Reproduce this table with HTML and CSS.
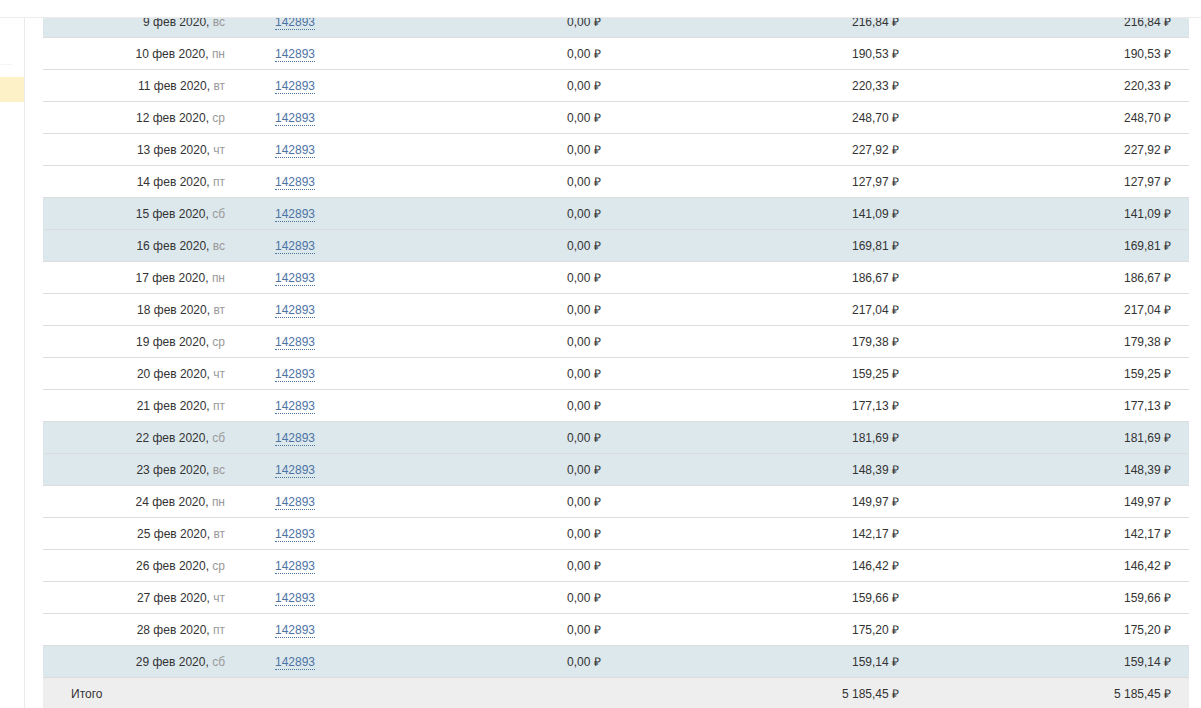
FILE: index.html
```html
<!DOCTYPE html>
<html lang="ru">
<head>
<meta charset="utf-8">
<title>Отчёт</title>
<link rel="stylesheet" href="styles.css">
</head>
<body>
<div class="page">
  <div class="topbar"></div>
  <div class="main">
    <aside class="sidebar">
      <div class="side-sep"></div>
      <div class="side-active"></div>
    </aside>
    <div class="content">
      <table class="report">
        <colgroup>
          <col class="c-date"><col class="c-id"><col class="c-a"><col class="c-b"><col class="c-c">
        </colgroup>
        <tbody>
          <tr class="we"><td class="date">9 фев 2020, <span class="wd">вс</span></td><td class="id"><a>142893</a></td><td class="zero">0,00 ₽</td><td class="num">216,84 ₽</td><td class="num last">216,84 ₽</td></tr>
          <tr><td class="date">10 фев 2020, <span class="wd">пн</span></td><td class="id"><a>142893</a></td><td class="zero">0,00 ₽</td><td class="num">190,53 ₽</td><td class="num last">190,53 ₽</td></tr>
          <tr><td class="date">11 фев 2020, <span class="wd">вт</span></td><td class="id"><a>142893</a></td><td class="zero">0,00 ₽</td><td class="num">220,33 ₽</td><td class="num last">220,33 ₽</td></tr>
          <tr><td class="date">12 фев 2020, <span class="wd">ср</span></td><td class="id"><a>142893</a></td><td class="zero">0,00 ₽</td><td class="num">248,70 ₽</td><td class="num last">248,70 ₽</td></tr>
          <tr><td class="date">13 фев 2020, <span class="wd">чт</span></td><td class="id"><a>142893</a></td><td class="zero">0,00 ₽</td><td class="num">227,92 ₽</td><td class="num last">227,92 ₽</td></tr>
          <tr><td class="date">14 фев 2020, <span class="wd">пт</span></td><td class="id"><a>142893</a></td><td class="zero">0,00 ₽</td><td class="num">127,97 ₽</td><td class="num last">127,97 ₽</td></tr>
          <tr class="we"><td class="date">15 фев 2020, <span class="wd">сб</span></td><td class="id"><a>142893</a></td><td class="zero">0,00 ₽</td><td class="num">141,09 ₽</td><td class="num last">141,09 ₽</td></tr>
          <tr class="we"><td class="date">16 фев 2020, <span class="wd">вс</span></td><td class="id"><a>142893</a></td><td class="zero">0,00 ₽</td><td class="num">169,81 ₽</td><td class="num last">169,81 ₽</td></tr>
          <tr><td class="date">17 фев 2020, <span class="wd">пн</span></td><td class="id"><a>142893</a></td><td class="zero">0,00 ₽</td><td class="num">186,67 ₽</td><td class="num last">186,67 ₽</td></tr>
          <tr><td class="date">18 фев 2020, <span class="wd">вт</span></td><td class="id"><a>142893</a></td><td class="zero">0,00 ₽</td><td class="num">217,04 ₽</td><td class="num last">217,04 ₽</td></tr>
          <tr><td class="date">19 фев 2020, <span class="wd">ср</span></td><td class="id"><a>142893</a></td><td class="zero">0,00 ₽</td><td class="num">179,38 ₽</td><td class="num last">179,38 ₽</td></tr>
          <tr><td class="date">20 фев 2020, <span class="wd">чт</span></td><td class="id"><a>142893</a></td><td class="zero">0,00 ₽</td><td class="num">159,25 ₽</td><td class="num last">159,25 ₽</td></tr>
          <tr><td class="date">21 фев 2020, <span class="wd">пт</span></td><td class="id"><a>142893</a></td><td class="zero">0,00 ₽</td><td class="num">177,13 ₽</td><td class="num last">177,13 ₽</td></tr>
          <tr class="we"><td class="date">22 фев 2020, <span class="wd">сб</span></td><td class="id"><a>142893</a></td><td class="zero">0,00 ₽</td><td class="num">181,69 ₽</td><td class="num last">181,69 ₽</td></tr>
          <tr class="we"><td class="date">23 фев 2020, <span class="wd">вс</span></td><td class="id"><a>142893</a></td><td class="zero">0,00 ₽</td><td class="num">148,39 ₽</td><td class="num last">148,39 ₽</td></tr>
          <tr><td class="date">24 фев 2020, <span class="wd">пн</span></td><td class="id"><a>142893</a></td><td class="zero">0,00 ₽</td><td class="num">149,97 ₽</td><td class="num last">149,97 ₽</td></tr>
          <tr><td class="date">25 фев 2020, <span class="wd">вт</span></td><td class="id"><a>142893</a></td><td class="zero">0,00 ₽</td><td class="num">142,17 ₽</td><td class="num last">142,17 ₽</td></tr>
          <tr><td class="date">26 фев 2020, <span class="wd">ср</span></td><td class="id"><a>142893</a></td><td class="zero">0,00 ₽</td><td class="num">146,42 ₽</td><td class="num last">146,42 ₽</td></tr>
          <tr><td class="date">27 фев 2020, <span class="wd">чт</span></td><td class="id"><a>142893</a></td><td class="zero">0,00 ₽</td><td class="num">159,66 ₽</td><td class="num last">159,66 ₽</td></tr>
          <tr><td class="date">28 фев 2020, <span class="wd">пт</span></td><td class="id"><a>142893</a></td><td class="zero">0,00 ₽</td><td class="num">175,20 ₽</td><td class="num last">175,20 ₽</td></tr>
          <tr class="we"><td class="date">29 фев 2020, <span class="wd">сб</span></td><td class="id"><a>142893</a></td><td class="zero">0,00 ₽</td><td class="num">159,14 ₽</td><td class="num last">159,14 ₽</td></tr>
          <tr class="total"><td class="label">Итого</td><td></td><td></td><td class="num">5 185,45 ₽</td><td class="num last">5 185,45 ₽</td></tr>
        </tbody>
      </table>
    </div>
  </div>
</div>
</body>
</html>
```

FILE: styles.css
```css
html, body {
  margin: 0;
  padding: 0;
  background: #fff;
  height: 100%;
  overflow: hidden;
}
body {
  font-family: "Liberation Sans", Arial, sans-serif;
  font-size: 12px;
  color: #333;
}
.page {
  display: flex;
  flex-direction: column;
  height: 708px;
}
.topbar {
  height: 17px;
  border-bottom: 1px solid #ececec;
  flex: none;
}
.main {
  flex: 1;
  display: flex;
  min-height: 0;
}
.sidebar {
  width: 24px;
  flex: none;
  border-right: 1px solid #ebebeb;
  display: flex;
  flex-direction: column;
}
.side-sep {
  height: 46px;
  border-bottom: 1px solid #f4f4f4;
  margin-right: 12px;
}
.side-active {
  margin-top: 12px;
  height: 25px;
  background: #fdf1c8;
}
.content {
  flex: 1;
  padding-left: 18px;
  overflow: hidden;
}
.report {
  width: 1146px;
  border-collapse: collapse;
  table-layout: fixed;
  margin-top: -12px;
}
.c-date { width: 200px; }
.c-id { width: 310px; }
.c-a { width: 200px; }
.c-b { width: 164px; }
.c-c { width: 272px; }
.report td {
  height: 31px;
  padding: 0;
  border-bottom: 1px solid #dddddd;
  white-space: nowrap;
  vertical-align: middle;
  line-height: 14px;
}
.report tr.we td {
  background: #dde8ed;
}
.report .date {
  text-align: right;
  padding-right: 18px;
}
.wd {
  color: #999;
}
.report .id {
  padding-left: 32px;
}
.report .id a {
  color: #4b73a3;
  text-decoration: none;
  border-bottom: 1px dotted #4b73a3;
}
.report .zero {
  padding-left: 14px;
}
.report .num {
  text-align: right;
  padding-right: 18px;
}
.report tr.total td {
  background: #eeeeee;
  border-bottom: none;
  height: 32px;
}
.report .label {
  padding-left: 28px;
  text-align: left;
}
```
